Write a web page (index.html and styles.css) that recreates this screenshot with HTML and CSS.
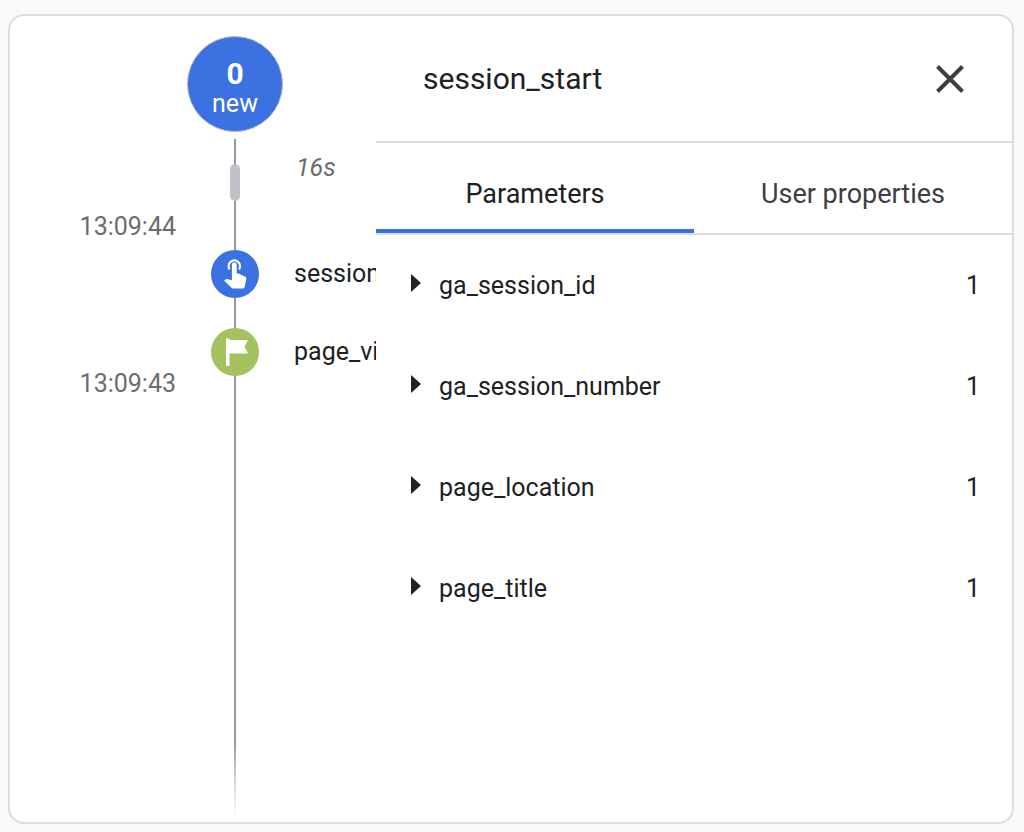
FILE: index.html
```html
<!DOCTYPE html>
<html lang="en">
<head>
<meta charset="utf-8">
<meta name="viewport" content="width=device-width, initial-scale=1">
<title>DebugView</title>
<link rel="stylesheet" href="styles.css">
</head>
<body>
<main class="card">
  <section class="timeline" aria-label="Event stream">
    <button class="counter" type="button"><strong class="counter-value">0</strong><span>new</span></button>
    <div class="stream">
      <div class="times">
        <time>13:09:44</time>
        <time>13:09:43</time>
      </div>
      <div class="rail">
        <span class="pill"></span>
        <span class="badge badge-session">
          <svg viewBox="0 0 48 48" aria-hidden="true">
            <path d="M18.600 19.300A5.700 5.700 0 1 1 28 19.300" fill="none" stroke="#fff" stroke-width="2.200"/>
            <path d="M20.900 14.700a2.400 2.400 0 0 1 4.800 0V23.500h1.800l6.800 3.200q1.200.6 1 1.900l-1.500 8.200q-.3 1.600-1.900 1.600H22.200q-1 0-1.700-.7L13.200 30.700l1.300-1.200q.6-.6 1.500-.4l4.900 1.100z" fill="#fff"/>
          </svg>
        </span>
        <span class="badge badge-page">
          <svg viewBox="0 0 48 48" aria-hidden="true">
            <path d="M15 10.500h3.500V12H37L33.500 18.700 37 25.500H18.500V38H15z" fill="#fff"/>
          </svg>
        </span>
      </div>
      <div class="labels">
        <em class="elapsed">16s</em>
        <span class="event">session_start</span>
        <span class="event">page_view</span>
      </div>
    </div>
  </section>

  <section class="panel" aria-labelledby="panel-title">
    <header class="panel-header">
      <h1 class="panel-title" id="panel-title">session_start</h1>
      <button class="close" type="button" aria-label="Close">
        <svg viewBox="0 0 30 30" aria-hidden="true"><path d="M2.500 2.500 27.500 27.500M27.500 2.500 2.500 27.500" stroke="#3c4043" stroke-width="4"/></svg>
      </button>
    </header>
    <div class="tabs" role="tablist">
      <button class="tab tab-active" type="button" role="tab" aria-selected="true">Parameters</button>
      <button class="tab" type="button" role="tab" aria-selected="false">User properties</button>
    </div>
    <div class="params">
      <button class="param" type="button" aria-expanded="false">
        <svg class="arrow" viewBox="0 0 10 18" aria-hidden="true"><path d="M0 0 10 9 0 18z"/></svg>
        <span class="name">ga_session_id</span><span>1</span>
      </button>
      <button class="param" type="button" aria-expanded="false">
        <svg class="arrow" viewBox="0 0 10 18" aria-hidden="true"><path d="M0 0 10 9 0 18z"/></svg>
        <span class="name">ga_session_number</span><span>1</span>
      </button>
      <button class="param" type="button" aria-expanded="false">
        <svg class="arrow" viewBox="0 0 10 18" aria-hidden="true"><path d="M0 0 10 9 0 18z"/></svg>
        <span class="name">page_location</span><span>1</span>
      </button>
      <button class="param" type="button" aria-expanded="false">
        <svg class="arrow" viewBox="0 0 10 18" aria-hidden="true"><path d="M0 0 10 9 0 18z"/></svg>
        <span class="name">page_title</span><span>1</span>
      </button>
    </div>
  </section>
</main>
</body>
</html>
```

FILE: styles.css
```css
* {
  box-sizing: border-box;
}

body {
  margin: 0;
  min-height: 100vh;
  padding: 14px 10px 8px 8px;
  display: flex;
  background: #f8f9fb;
  color: #202124;
  font: 25px/30px Roboto, "Liberation Sans", sans-serif;
}

button {
  margin: 0;
  padding: 0;
  border: 0;
  background: none;
  color: inherit;
  font: inherit;
  cursor: pointer;
}

svg {
  display: block;
}

.card {
  flex: 1;
  display: flex;
  min-width: 0;
  border: 2px solid #dadce0;
  border-radius: 16px;
  background: #fff;
  overflow: hidden;
}

/* Timeline */
.timeline {
  flex: 0 0 366px;
  display: flex;
  flex-direction: column;
  gap: 7px;
  padding: 20px 0 5px;
  overflow: hidden;
}

.counter {
  width: 96px;
  height: 96px;
  margin-left: 177px;
  padding-top: 9px;
  display: flex;
  flex-direction: column;
  align-items: center;
  justify-content: center;
  border: 1px solid #b8babf;
  border-radius: 50%;
  background: #3b71e0;
  color: #fff;
}

.counter-value {
  font-size: 30px;
  font-weight: 700;
}

.stream {
  flex: 1;
  display: grid;
  grid-template-columns: 166px 118px 82px;
  background: linear-gradient(#999 0, #999 89%, #c4c5cb 93%, #fff 100%) 224px 0 / 2px 100% no-repeat;
}

.times,
.labels,
.rail {
  display: flex;
  flex-direction: column;
}

.times {
  align-items: flex-end;
  gap: 127px;
  padding-top: 73px;
  color: #6b6d70;
}

.rail {
  align-items: center;
  gap: 30px;
  padding-top: 25px;
}

.pill {
  width: 10px;
  height: 37px;
  margin-bottom: 19px;
  border-radius: 5px;
  background: #c1c2c8;
}

.badge {
  width: 48px;
  height: 48px;
  border-radius: 50%;
}

.badge-session {
  background: #3b71e0;
}

.badge-page {
  background: #a5c261;
}

.labels {
  gap: 48px;
  padding-top: 14px;
  overflow: hidden;
  white-space: nowrap;
}

.elapsed {
  margin: 0 0 28px 2px;
  color: #6b6d70;
}

/* Details panel */
.panel {
  flex: 1;
  min-width: 0;
}

.panel-header {
  display: flex;
  align-items: center;
  justify-content: space-between;
  padding: 38px 47px 37px;
  border-bottom: 2px solid #dadce0;
}

.panel-title {
  margin: 0;
  font-size: 30px;
  font-weight: 400;
  line-height: 50px;
}

.close svg {
  width: 30px;
  height: 30px;
}

.tabs {
  display: grid;
  grid-template-columns: 1fr 1fr;
  border-bottom: 2px solid #dadce0;
}

.tab {
  padding: 36px 0 20px;
  border-bottom: 4px solid transparent;
  color: #3c4043;
  font-size: 27px;
}

.tab-active {
  border-color: #3b71e0;
  color: #202124;
}

.param {
  display: flex;
  align-items: center;
  gap: 18px;
  width: 100%;
  padding: 36px 32px 35px 35px;
  text-align: left;
}

.arrow {
  width: 10px;
  height: 18px;
  margin-bottom: 6px;
  fill: #202124;
}

.name {
  flex: 1;
}
```
